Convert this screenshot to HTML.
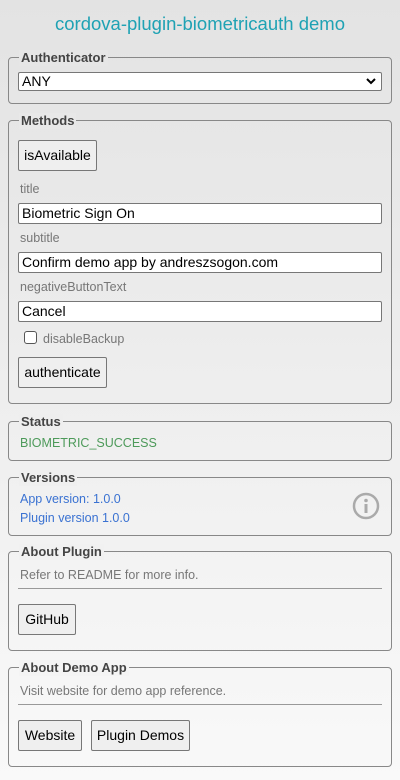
<!DOCTYPE html>
<html><head><meta charset="utf-8"><style>
*{box-sizing:border-box;margin:0;padding:0}
html,body{width:400px;height:780px;overflow:hidden}
body{background:linear-gradient(#e3e3e3,#f9f9f9);font-family:"Liberation Sans",sans-serif;position:relative;color:#555}
.a{position:absolute}
.t{left:0;width:400px;text-align:center;top:13px;font-size:18.5px;color:#1fa2b4}
.fs{position:absolute;left:8px;width:384px;border:1px solid #888;border-radius:4px}
.lg{position:absolute;left:10px;top:-8px;padding:0 2px;font-size:13px;font-weight:bold;color:#444;background:#ececec;line-height:16px}
.in{position:absolute;left:18px;width:364px;height:21px;border:1px solid #777;background:#fff;border-radius:2px;font-size:14px;color:#000;padding-left:3px;line-height:19px}
.btn{position:absolute;height:31px;border:1px solid #777;border-radius:2px;background:#efefef;font-size:14px;color:#000;text-align:center;line-height:29px}
.lb{position:absolute;left:20px;font-size:12.5px;color:#777}
.hr{position:absolute;left:18px;width:364px;height:1px;background:#999}
</style></head><body>
<div class="a t">cordova-plugin-biometricauth demo</div>

<div class="fs" style="top:57px;height:47px"><div class="lg" style="background:#e6e6e6">Authenticator</div></div>
<div class="in" style="top:72px;height:19px;line-height:17px">ANY
<svg class="a" style="right:5px;top:5px" width="10" height="7" viewBox="0 0 10 7"><path d="M1 1l4 4 4-4" stroke="#000" stroke-width="2" fill="none"/></svg></div>

<div class="fs" style="top:120px;height:284px"><div class="lg" style="background:#e8e8e8">Methods</div></div>
<div class="btn" style="left:18px;top:140px;width:79px">isAvailable</div>
<div class="lb" style="top:182px">title</div>
<div class="in" style="top:203px">Biometric Sign On</div>
<div class="lb" style="top:231px">subtitle</div>
<div class="in" style="top:252px">Confirm demo app by andreszsogon.com</div>
<div class="lb" style="top:280px">negativeButtonText</div>
<div class="in" style="top:301px">Cancel</div>
<div class="a" style="left:24px;top:331px;width:13px;height:13px;border:1px solid #555;border-radius:3px;background:#fff"></div>
<div class="lb" style="left:43px;top:332px">disableBackup</div>
<div class="btn" style="left:18px;top:357px;width:89px">authenticate</div>

<div class="fs" style="top:421px;height:40px"><div class="lg" style="background:#eeeeee">Status</div></div>
<div class="lb" style="top:436px;color:#4d9a5a">BIOMETRIC_SUCCESS</div>

<div class="fs" style="top:477px;height:59px"><div class="lg" style="background:#efefef">Versions</div></div>
<div class="lb" style="top:492px;color:#3a72d2">App version: 1.0.0</div>
<div class="lb" style="top:511px;color:#3a72d2">Plugin version 1.0.0</div>
<svg class="a" style="left:352px;top:492px" width="28" height="28" viewBox="0 0 28 28"><circle cx="14" cy="14" r="12" stroke="#aaa" stroke-width="2.5" fill="none"/><circle cx="14" cy="8.5" r="1.8" fill="#aaa"/><rect x="12.5" y="12" width="3" height="9" fill="#aaa"/></svg>

<div class="fs" style="top:551px;height:100px"><div class="lg" style="background:#f1f1f1">About Plugin</div></div>
<div class="lb" style="top:568px">Refer to README for more info.</div>
<div class="hr" style="top:588px"></div>
<div class="btn" style="left:18px;top:604px;width:58px">GitHub</div>

<div class="fs" style="top:667px;height:100px"><div class="lg" style="background:#f4f4f4">About Demo App</div></div>
<div class="lb" style="top:684px">Visit website for demo app reference.</div>
<div class="hr" style="top:704px"></div>
<div class="btn" style="left:18px;top:720px;width:64px">Website</div>
<div class="btn" style="left:91px;top:720px;width:99px">Plugin Demos</div>
</body></html>
